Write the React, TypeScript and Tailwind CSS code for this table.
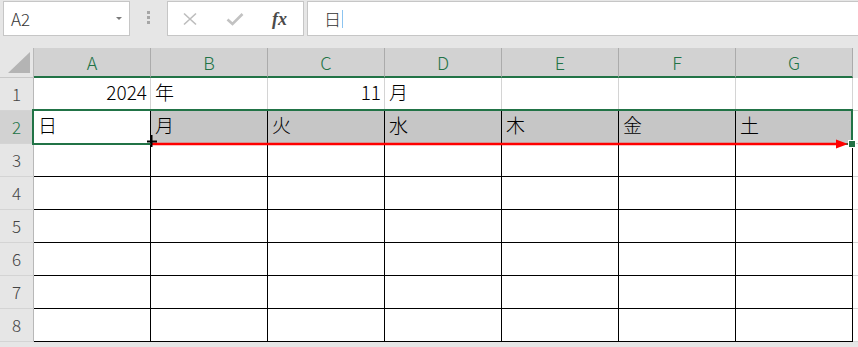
import React from "react";

const COLS = ["A", "B", "C", "D", "E", "F", "G"];
const WEEK = ["日", "月", "火", "水", "木", "金", "土"];
const ROWS = [3, 4, 5, 6, 7, 8];

const jp = "font-['Noto_Sans_CJK_JP','Noto_Sans',sans-serif] font-light";

function RowHead({ n, active }: { n: number; active?: boolean }) {
  return (
    <div
      className={`flex items-center justify-center border-r border-b border-r-[#b8b8b8] border-b-[#d4d4d4] text-[17px] ${
        active ? "bg-[#d2d2d2] text-[#217346]" : "bg-[#e6e6e6] text-[#444]"
      }`}
    >
      {n}
    </div>
  );
}

function FormulaBar() {
  return (
    <div className="flex h-[36px] items-start pt-px">
      {/* name box */}
      <div className="ml-[3px] flex h-[35px] w-[127px] items-center justify-between border border-[#c6c6c6] bg-white pl-[7px] pr-[7px]">
        <span className="text-[17px] text-[#333]">A2</span>
        <span className="h-0 w-0 border-x-[3px] border-t-[3px] border-x-transparent border-t-[#7a7a7a]" />
      </div>
      {/* drag dots */}
      <div className="flex w-[37px] flex-col items-center gap-[2px] pt-[10px]">
        <span className="h-[3px] w-[3px] bg-[#a6a6a6]" />
        <span className="h-[3px] w-[3px] bg-[#a6a6a6]" />
        <span className="h-[3px] w-[3px] bg-[#a6a6a6]" />
      </div>
      {/* cancel / enter / fx */}
      <div className="flex h-[35px] w-[137px] items-center border border-[#c6c6c6] bg-white">
        <svg width="16" height="14" viewBox="0 0 16 14" className="ml-[14px]">
          <path d="M2 1.5 L14 12.5 M14 1.5 L2 12.5" stroke="#bdbdbd" strokeWidth="1.6" />
        </svg>
        <svg width="18" height="14" viewBox="0 0 18 14" className="ml-[28px]">
          <path d="M1.5 7.5 L6.5 12 L16.5 2" stroke="#c2c2c2" strokeWidth="2.6" fill="none" />
        </svg>
        <span className="ml-[28px] font-['Liberation_Serif',serif] text-[18px] font-bold italic leading-none text-[#4a4a4a]">
          fx
        </span>
      </div>
      {/* formula input */}
      <div className="ml-[3px] flex h-[35px] flex-1 items-center border border-r-0 border-[#c6c6c6] bg-white pl-[16px]">
        <span className="text-[17px] text-[#333]">日</span>
        <span className="ml-px h-[18px] w-px bg-[#8cc4f0]" />
      </div>
    </div>
  );
}

function Sheet() {
  return (
    <div className="grid grid-cols-[34px_repeat(7,117px)_1fr] grid-rows-[30px_repeat(8,33px)_1fr]">
      {/* corner */}
      <div className="relative border-r border-b border-r-[#b8b8b8] border-b-[#c8c8c8] bg-[#e6e6e6]">
        <svg width="23" height="22" className="absolute left-[8px] top-[4px]">
          <polygon points="22,0 22,21 0,21" fill="#b4b4b4" />
        </svg>
      </div>
      {COLS.map((c) => (
        <div
          key={c}
          className="flex items-center justify-center border-r border-b-2 border-r-[#ababab] border-b-[#217346] bg-[#d2d2d2] text-[18px] text-[#217346]"
        >
          {c}
        </div>
      ))}
      <div className="bg-[#e6e6e6]" />

      {/* row 1 */}
      <RowHead n={1} />
      <div className="flex items-center justify-end border-r border-b border-[#d4d4d4] bg-white pb-[3px] pr-[3px] text-[19px] text-black">
        2024
      </div>
      <div className="flex items-center border-r border-b border-[#d4d4d4] bg-white pb-[3px] pl-[4px] text-[19px] text-black">
        年
      </div>
      <div className="flex items-center justify-end border-r border-b border-[#d4d4d4] bg-white pb-[3px] pr-[3px] text-[19px] text-black">
        11
      </div>
      <div className="flex items-center border-r border-b border-[#d4d4d4] bg-white pb-[3px] pl-[4px] text-[19px] text-black">
        月
      </div>
      <div className="border-r border-b border-[#d4d4d4] bg-white" />
      <div className="border-r border-b border-[#d4d4d4] bg-white" />
      <div className="border-r border-b border-[#d4d4d4] bg-white" />
      <div className="border-b border-[#d4d4d4] bg-white" />

      {/* row 2: weekday labels */}
      <RowHead n={2} active />
      {WEEK.map((d, i) => (
        <div
          key={d}
          className={`flex items-center border-r border-b border-black pb-[3px] pl-[4px] text-[19px] text-black ${
            i === 0 ? "bg-white" : "bg-[#c6c6c6]"
          }`}
        >
          {d}
        </div>
      ))}
      <div className="border-b border-[#d4d4d4] bg-white" />

      {/* rows 3-8 */}
      {ROWS.map((r) => (
        <React.Fragment key={r}>
          <RowHead n={r} />
          {COLS.map((c) => (
            <div key={c} className="border-r border-b border-black bg-white" />
          ))}
          <div className="border-b border-[#d4d4d4] bg-white" />
        </React.Fragment>
      ))}

      {/* row 9, cut off */}
      <div className="border-r border-r-[#b8b8b8] bg-[#e6e6e6]" />
      {COLS.map((c) => (
        <div key={c} className="border-r border-[#d4d4d4] bg-white" />
      ))}
      <div className="bg-white" />
    </div>
  );
}

export default function App() {
  return (
    <div className={`relative h-[347px] w-[858px] overflow-hidden bg-[#e6e6e6] ${jp}`}>
      <FormulaBar />
      <div className="h-[12px]" />
      <Sheet />

      {/* active range outline */}
      <div className="pointer-events-none absolute left-[32px] top-[109px] h-[36px] w-[821px] border-2 border-[#217346]" />

      {/* fill arrow across the row */}
      <svg className="absolute left-[150px] top-[136px]" width="700" height="16">
        <line x1="2" y1="8" x2="690" y2="8" stroke="#ff0000" strokeWidth="2.5" />
        <polygon points="686,3.5 698,8 686,12.5" fill="#ff0000" />
      </svg>

      {/* fill handle */}
      <div className="absolute left-[848px] top-[140px] h-[8px] w-[8px] border border-white bg-[#217346]" />

      {/* crosshair cursor */}
      <svg className="absolute left-[146px] top-[135px]" width="12" height="13">
        <rect x="1" y="5.5" width="10" height="2" fill="#000" />
        <rect x="4.5" y="0" width="2" height="12" fill="#000" />
      </svg>
    </div>
  );
}
